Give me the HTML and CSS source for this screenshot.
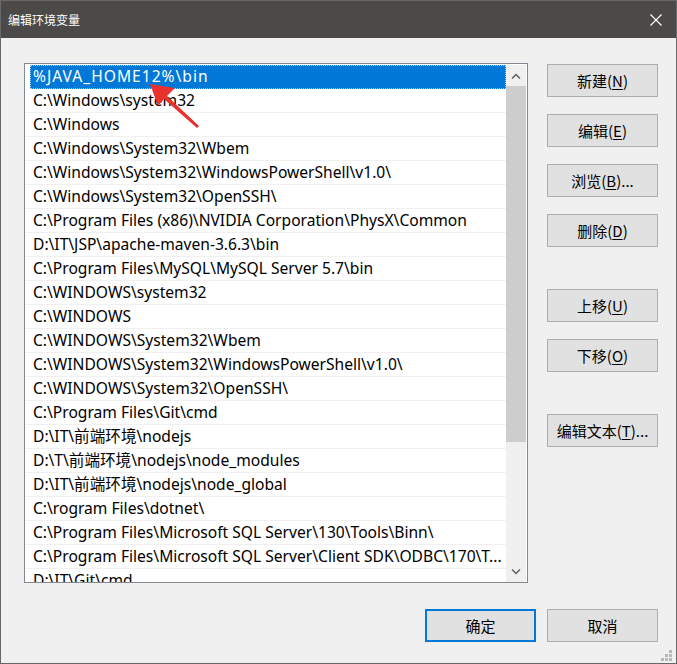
FILE: index.html
```html
<!DOCTYPE html>
<html lang="zh-CN">
<head>
<meta charset="utf-8">
<title>编辑环境变量</title>
<link rel="stylesheet" href="styles.css">
</head>
<body>
<div class="window">
  <div class="titlebar">
    <span class="title">编辑环境变量</span>
    <svg class="close" width="12" height="12" viewBox="0 0 12 12"><path d="M0.5 0.5 L11.5 11.5 M11.5 0.5 L0.5 11.5" stroke="#ffffff" stroke-width="1.2" fill="none"/></svg>
  </div>
  <div class="content">
    <div class="listbox">
      <div class="rows">
        <div class="row selected">%JAVA_HOME12%\bin</div>
        <div class="row">C:\Windows\system32</div>
        <div class="row">C:\Windows</div>
        <div class="row">C:\Windows\System32\Wbem</div>
        <div class="row">C:\Windows\System32\WindowsPowerShell\v1.0\</div>
        <div class="row">C:\Windows\System32\OpenSSH\</div>
        <div class="row">C:\Program Files (x86)\NVIDIA Corporation\PhysX\Common</div>
        <div class="row">D:\IT\JSP\apache-maven-3.6.3\bin</div>
        <div class="row">C:\Program Files\MySQL\MySQL Server 5.7\bin</div>
        <div class="row">C:\WINDOWS\system32</div>
        <div class="row">C:\WINDOWS</div>
        <div class="row">C:\WINDOWS\System32\Wbem</div>
        <div class="row">C:\WINDOWS\System32\WindowsPowerShell\v1.0\</div>
        <div class="row">C:\WINDOWS\System32\OpenSSH\</div>
        <div class="row">C:\Program Files\Git\cmd</div>
        <div class="row">D:\IT\前端环境\nodejs</div>
        <div class="row">D:\T\前端环境\nodejs\node_modules</div>
        <div class="row">D:\IT\前端环境\nodejs\node_global</div>
        <div class="row">C:\rogram Files\dotnet\</div>
        <div class="row">C:\Program Files\Microsoft SQL Server\130\Tools\Binn\</div>
        <div class="row">C:\Program Files\Microsoft SQL Server\Client SDK\ODBC\170\T...</div>
        <div class="row">D:\IT\Git\cmd</div>
      </div>
      <div class="scrollbar">
        <div class="arrow">
          <svg width="10" height="6" viewBox="0 0 10 6"><path d="M1 5.5 L5 1.5 L9 5.5" stroke="#606060" stroke-width="1.5" fill="none"/></svg>
        </div>
        <div class="track"><div class="thumb"></div></div>
        <div class="arrow">
          <svg width="10" height="6" viewBox="0 0 10 6"><path d="M1 0.5 L5 4.5 L9 0.5" stroke="#606060" stroke-width="1.5" fill="none"/></svg>
        </div>
      </div>
      <svg class="annot" width="80" height="60" viewBox="0 0 80 60">
        <path d="M0 0 L25 4 L17 12 L49 42 L47 44 L14 15 L8 22 Z" fill="#e8322d"/>
      </svg>
    </div>
    <div class="buttons">
      <div class="btn">新建(<u>N</u>)</div>
      <div class="btn">编辑(<u>E</u>)</div>
      <div class="btn">浏览(<u>B</u>)...</div>
      <div class="btn">删除(<u>D</u>)</div>
      <div class="btn sep">上移(<u>U</u>)</div>
      <div class="btn">下移(<u>O</u>)</div>
      <div class="btn sep">编辑文本(<u>T</u>)...</div>
    </div>
  </div>
  <div class="footer">
    <div class="btn default">确定</div>
    <div class="btn">取消</div>
  </div>
  <svg class="grip" width="12" height="12" viewBox="0 0 12 12" fill="#b9b9b9">
    <rect x="8" y="0" width="3" height="3"/>
    <rect x="4" y="4" width="3" height="3"/>
    <rect x="8" y="4" width="3" height="3"/>
    <rect x="0" y="8" width="3" height="3"/>
    <rect x="4" y="8" width="3" height="3"/>
    <rect x="8" y="8" width="3" height="3"/>
  </svg>
</div>
</body>
</html>
```

FILE: styles.css
```css
* { box-sizing: border-box; }
html, body { margin: 0; padding: 0; }
body {
  background: #f0f0f0;
  font-family: "Noto Sans", "Noto Sans CJK SC", sans-serif;
  color: #000;
}
.window {
  position: relative;
  width: 677px;
  height: 664px;
  border: 1px solid #686868;
  background: #f0f0f0;
  display: flex;
  flex-direction: column;
}
.titlebar {
  height: 37px;
  background: #4b4a48;
  display: flex;
  align-items: center;
  justify-content: space-between;
  padding: 0 14px 0 7px;
  flex-shrink: 0;
}
.title {
  color: #ffffff;
  font-family: "Noto Sans CJK SC", sans-serif;
  font-size: 12px;
}
.close { display: block; }
.content {
  display: flex;
  padding: 25px 0 0 23px;
}
.listbox {
  position: relative;
  width: 504px;
  height: 520px;
  border: 1px solid #828790;
  background: #ffffff;
  display: flex;
  padding: 1px 1px 0 1px;
}
.rows {
  flex: 1;
  overflow: hidden;
  display: flex;
  flex-direction: column;
}
.row {
  height: 24px;
  flex-shrink: 0;
  line-height: 23px;
  border-bottom: 1px solid #f0f0f0;
  padding-left: 7px;
  font-size: 15.6px;
  white-space: nowrap;
  overflow: hidden;
}
.row.selected {
  margin-left: 4px;
  padding-left: 3px;
  background: #0078d7;
  color: #ffffff;
  border-bottom: none;
  line-height: 23px;
  letter-spacing: 1px;
  outline: 1px dotted #9fc9ef;
  outline-offset: -1px;
}
.scrollbar {
  width: 20px;
  background: #f0f0f0;
  display: flex;
  flex-direction: column;
}
.arrow {
  height: 21px;
  display: flex;
  align-items: center;
  justify-content: center;
  flex-shrink: 0;
}
.track { flex: 1; }
.thumb {
  height: 356px;
  background: #cdcdcd;
}
.annot {
  position: absolute;
  left: 125px;
  top: 20px;
}
.buttons {
  display: flex;
  flex-direction: column;
  gap: 17px;
  margin-left: 19px;
  padding-top: 1px;
}
.btn {
  width: 111px;
  height: 33px;
  background: #e1e1e1;
  border: 1px solid #adadad;
  display: flex;
  align-items: center;
  justify-content: center;
  font-family: "Noto Sans CJK SC", sans-serif;
  font-size: 15px;
  color: #000;
}
.btn u { text-underline-offset: 2px; text-decoration-thickness: 1px; }
.btn.sep { margin-top: 25px; }
.btn.default { border: 2px solid #0078d7; }
.footer {
  display: flex;
  justify-content: flex-end;
  gap: 11px;
  padding: 26px 18px 0 0;
}
.grip {
  position: absolute;
  right: 3px;
  bottom: 1px;
}
```
